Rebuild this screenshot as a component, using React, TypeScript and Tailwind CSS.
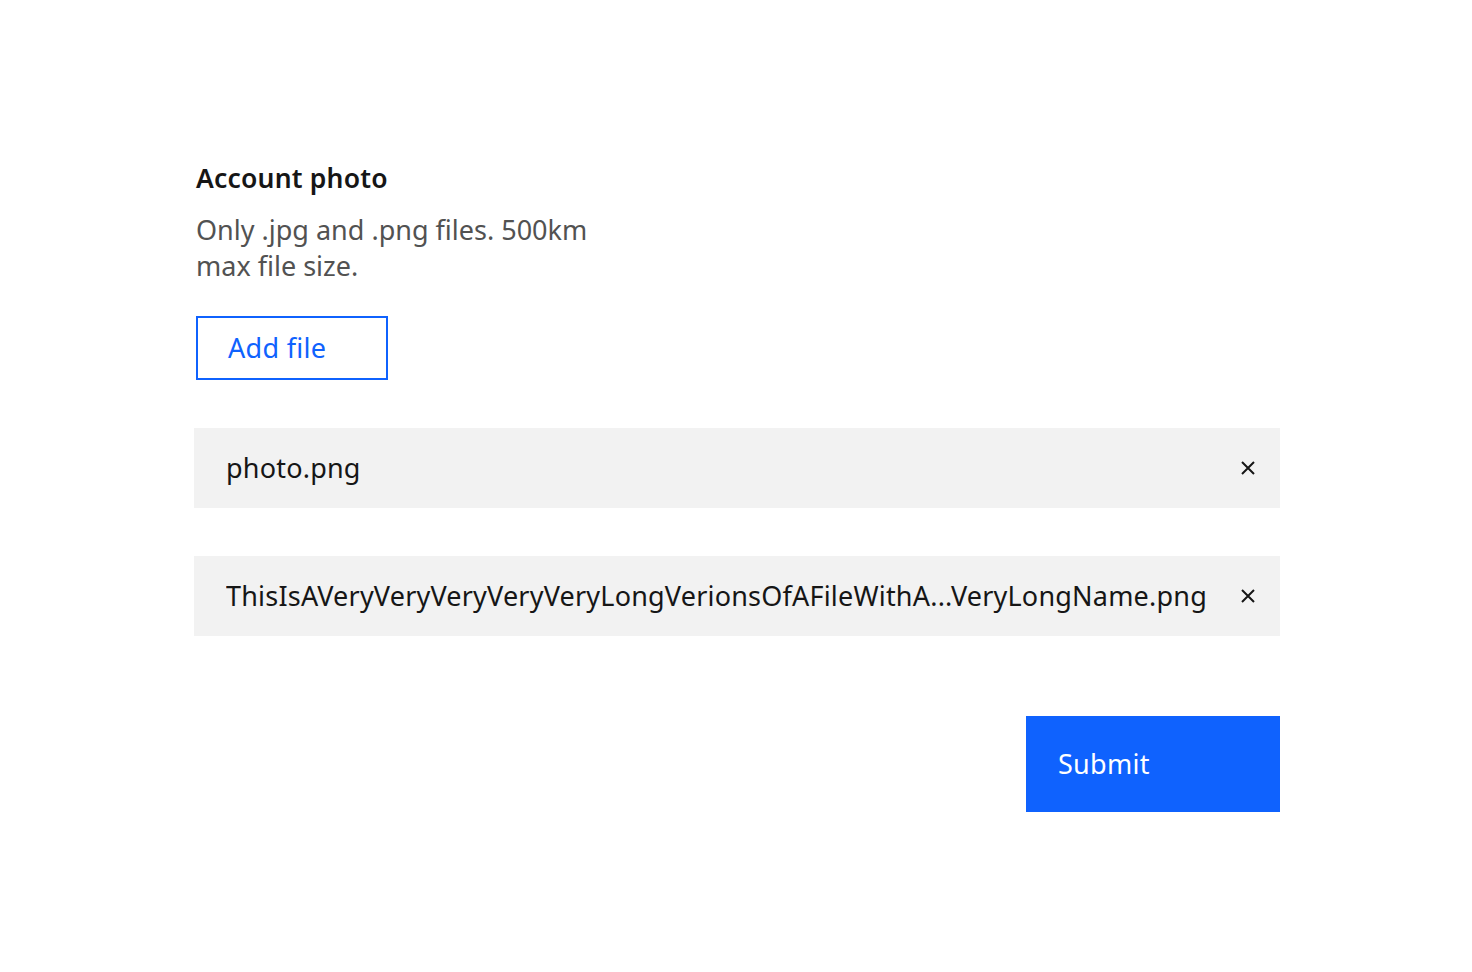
import React from 'react';

const files = [
  'photo.png',
  'ThisIsAVeryVeryVeryVeryVeryLongVerionsOfAFileWithA...VeryLongName.png',
];

const CloseIcon = () => (
  <svg width="16" height="16" viewBox="0 0 16 16" fill="none" stroke="#161616" strokeWidth="2">
    <path d="M2 2 L14 14 M14 2 L2 14" />
  </svg>
);

const App = () => {
  return (
    <div className="min-h-screen bg-white" style={{ fontFamily: '"Noto Sans", sans-serif' }}>
      <div className="ml-[194px] w-[1086px] pt-[160px]">
        {/* uploader header */}
        <div className="pl-[2px]">
          <h3 className="text-[26.5px] leading-[36px] font-semibold tracking-[0.2px] text-[#161616]">Account photo</h3>
          <p className="mt-[16px] max-w-[420px] text-[27px] leading-[36px] text-[#525252]">
            Only .jpg and .png files. 500km max file size.
          </p>
          <button className="mt-[32px] flex h-[64px] w-[192px] items-center border-2 border-[#0f62fe] px-[30px] text-[27px] tracking-[0.3px] text-[#0f62fe]">
            Add file
          </button>
        </div>

        {/* file list */}
        <div className="mt-[48px] flex flex-col gap-[48px]">
          {files.map((name) => (
            <div key={name} className="flex h-[80px] items-center justify-between bg-[#f2f2f2] pl-[32px] pr-[24px]">
              <span className="min-w-0 truncate text-[27px] tracking-[0.2px] text-[#161616]">{name}</span>
              <button className="ml-[20px] flex shrink-0 items-center">
                <CloseIcon />
              </button>
            </div>
          ))}
        </div>

        <div className="mt-[80px] flex justify-end">
          <button className="flex h-[96px] w-[254px] items-center bg-[#0f62fe] px-[32px] text-[27px] tracking-[0.3px] text-white">
            Submit
          </button>
        </div>
      </div>
    </div>
  );
};

export default App;
